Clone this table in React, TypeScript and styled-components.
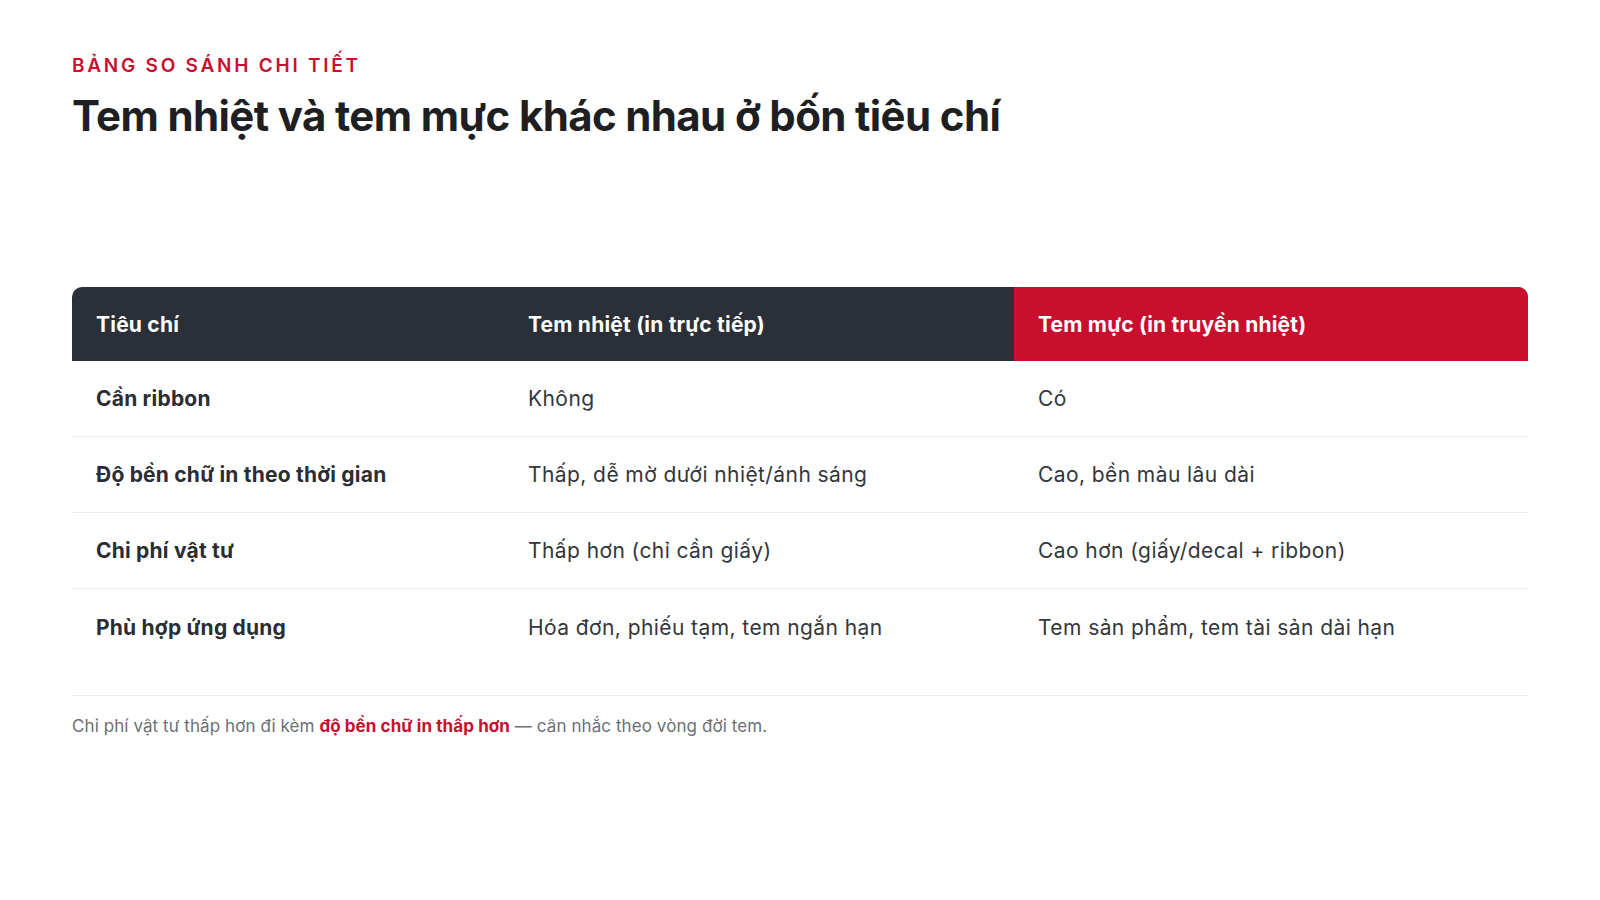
import styled, { createGlobalStyle } from "styled-components";

interface Row {
  criterion: string;
  thermal: string;
  ribbon: string;
}

const ROWS: Row[] = [
  { criterion: "Cần ribbon", thermal: "Không", ribbon: "Có" },
  {
    criterion: "Độ bền chữ in theo thời gian",
    thermal: "Thấp, dễ mờ dưới nhiệt/ánh sáng",
    ribbon: "Cao, bền màu lâu dài",
  },
  {
    criterion: "Chi phí vật tư",
    thermal: "Thấp hơn (chỉ cần giấy)",
    ribbon: "Cao hơn (giấy/decal + ribbon)",
  },
  {
    criterion: "Phù hợp ứng dụng",
    thermal: "Hóa đơn, phiếu tạm, tem ngắn hạn",
    ribbon: "Tem sản phẩm, tem tài sản dài hạn",
  },
];

const GlobalStyle = createGlobalStyle`
  * { box-sizing: border-box; }
  body {
    margin: 0;
    background: #ffffff;
    font-family: Inter, "Noto Sans", sans-serif;
    color: #2a2d33;
  }
`;

export default function App() {
  return (
    <Page>
      <GlobalStyle />
      <Eyebrow>Bảng so sánh chi tiết</Eyebrow>
      <Title>Tem nhiệt và tem mực khác nhau ở bốn tiêu chí</Title>

      <Table>
        <HeadRow>
          <HeadCell>Tiêu chí</HeadCell>
          <HeadCell>Tem nhiệt (in trực tiếp)</HeadCell>
          <HeadCell $accent>Tem mực (in truyền nhiệt)</HeadCell>
        </HeadRow>
        {ROWS.map((row, i) => (
          <BodyRow key={row.criterion} $last={i === ROWS.length - 1}>
            <LabelCell>{row.criterion}</LabelCell>
            <Cell>{row.thermal}</Cell>
            <Cell>{row.ribbon}</Cell>
          </BodyRow>
        ))}
      </Table>

      <Footnote>
        Chi phí vật tư thấp hơn đi kèm <Highlight>độ bền chữ in thấp hơn</Highlight>{" "}
        — cân nhắc theo vòng đời tem.
      </Footnote>
    </Page>
  );
}

const Page = styled.div`
  width: 1600px;
  height: 900px;
  padding: 54px 72px 0;
  display: flex;
  flex-direction: column;
`;

const Eyebrow = styled.div`
  color: #c8102e;
  font-size: 19px;
  font-weight: 600;
  letter-spacing: 0.145em;
  text-transform: uppercase;
  line-height: 24px;
`;

const Title = styled.h1`
  margin: 12px 0 0;
  font-size: 42px;
  font-weight: 700;
  letter-spacing: -0.015em;
  line-height: 52px;
  color: #1d1f23;
`;

const Table = styled.div`
  margin-top: 145px;
  display: flex;
  flex-direction: column;
`;

const Grid = styled.div`
  display: grid;
  grid-template-columns: 432px 510px 1fr;
`;

const HeadRow = styled(Grid)`
  height: 74px;
  border-radius: 10px 10px 0 0;
  overflow: hidden;
  background: #2b3038;
`;

const HeadCell = styled.div<{ $accent?: boolean }>`
  display: flex;
  align-items: center;
  padding: 0 24px;
  font-size: 21px;
  font-weight: 700;
  letter-spacing: 0.01em;
  color: #ffffff;
  background: ${p => (p.$accent ? "#c8102e" : "transparent")};
`;

const BodyRow = styled(Grid)<{ $last?: boolean }>`
  height: 76px;
  border-bottom: ${p => (p.$last ? "none" : "1px solid #ececec")};
`;

const Cell = styled.div`
  display: flex;
  align-items: center;
  padding: 0 24px;
  font-size: 21px;
  font-weight: 400;
  letter-spacing: 0.02em;
  color: #33363c;
`;

const LabelCell = styled(Cell)`
  font-weight: 700;
  letter-spacing: 0.01em;
  color: #2a2d33;
`;

const Footnote = styled.p`
  margin: 30px 0 0;
  padding-top: 20px;
  border-top: 1px solid #ececec;
  font-size: 17px;
  letter-spacing: 0.005em;
  color: #6b6f76;
`;

const Highlight = styled.strong`
  color: #c8102e;
  font-weight: 700;
`;
